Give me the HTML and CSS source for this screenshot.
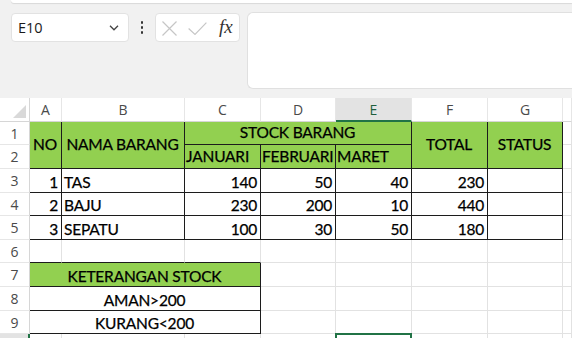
FILE: index.html
```html
<!DOCTYPE html>
<html>
<head>
<meta charset="utf-8">
<link rel="stylesheet" href="styles.css">
</head>
<body>
<div class="ribbon-edge"></div>
<div class="fbar">
  <div class="namebox">
    <span class="nb-text">E10</span>
    <svg class="chev" width="10" height="6" viewBox="0 0 10 6"><path d="M1 0.8 L5 4.8 L9 0.8" fill="none" stroke="#444" stroke-width="1.3"/></svg>
  </div>
  <div class="vdots"><span></span><span></span><span></span></div>
  <div class="fxbox">
    <svg class="ic-x" width="15" height="15" viewBox="0 0 15 15"><path d="M0.5 0.5 L14.5 14.5 M14.5 0.5 L0.5 14.5" stroke="#c6c6c6" stroke-width="1.2" fill="none"/></svg>
    <svg class="ic-ok" width="19" height="13" viewBox="0 0 19 13"><path d="M0.6 6.5 L7 12.4 L18.4 0.6" stroke="#c6c6c6" stroke-width="1.2" fill="none"/></svg>
    <span class="fx">fx</span>
  </div>
  <div class="formula"></div>
</div>
<div class="sheet">
  <!-- header -->
  <div class="h corner"><span class="tri"></span></div>
  <div class="h">A</div><div class="h">B</div><div class="h">C</div><div class="h">D</div>
  <div class="h hsel">E</div><div class="h">F</div><div class="h">G</div><div class="h"></div>

  <!-- row 1 -->
  <div class="rh">1</div>
  <div class="c b g ctr mid span2r">NO</div>
  <div class="c b g ctr mid span2r">NAMA BARANG</div>
  <div class="c b g ctr mid span3c">STOCK BARANG</div>
  <div class="c b g ctr mid span2r">TOTAL</div>
  <div class="c b g ctr mid span2r">STATUS</div>
  <div class="c"></div>

  <!-- row 2 -->
  <div class="rh">2</div>
  <div class="c b g mid tight">JANUARI</div>
  <div class="c b g mid tight">FEBRUARI</div>
  <div class="c b g mid tight">MARET</div>
  <div class="c"></div>

  <!-- row 3 -->
  <div class="rh">3</div>
  <div class="c b r">1</div><div class="c b">TAS</div>
  <div class="c b r">140</div><div class="c b r">50</div><div class="c b r">40</div>
  <div class="c b r">230</div><div class="c b"></div><div class="c"></div>

  <!-- row 4 -->
  <div class="rh">4</div>
  <div class="c b r">2</div><div class="c b">BAJU</div>
  <div class="c b r">230</div><div class="c b r">200</div><div class="c b r">10</div>
  <div class="c b r">440</div><div class="c b"></div><div class="c"></div>

  <!-- row 5 -->
  <div class="rh">5</div>
  <div class="c b r">3</div><div class="c b">SEPATU</div>
  <div class="c b r">100</div><div class="c b r">30</div><div class="c b r">50</div>
  <div class="c b r">180</div><div class="c b"></div><div class="c"></div>

  <!-- row 6 -->
  <div class="rh">6</div>
  <div class="c bb"></div><div class="c bb"></div><div class="c bb"></div>
  <div class="c"></div><div class="c"></div><div class="c"></div><div class="c"></div><div class="c"></div>

  <!-- row 7 -->
  <div class="rh">7</div>
  <div class="c b g ctr span3c">KETERANGAN STOCK</div>
  <div class="c"></div><div class="c"></div><div class="c"></div><div class="c"></div><div class="c"></div>

  <!-- row 8 -->
  <div class="rh">8</div>
  <div class="c b ctr span3c">AMAN&gt;200</div>
  <div class="c"></div><div class="c"></div><div class="c"></div><div class="c"></div><div class="c"></div>

  <!-- row 9 -->
  <div class="rh">9</div>
  <div class="c b ctr span3c">KURANG&lt;200</div>
  <div class="c"></div><div class="c"></div><div class="c"></div><div class="c"></div><div class="c"></div>

  <!-- row 10 (only its top edge is in view) -->
  <div class="rh rhsel"></div>
  <div class="c"></div><div class="c"></div><div class="c"></div><div class="c"></div>
  <div class="c sel"></div><div class="c"></div><div class="c"></div><div class="c"></div>
</div>
</body>
</html>
```

FILE: styles.css
```css
html, body {
  margin: 0;
  padding: 0;
  background: #f1f1f1;
  overflow: hidden;
  height: 338px;
}

.ribbon-edge {
  height: 3px;
  margin-left: 11px;
  background: #fff;
  border-bottom-left-radius: 6px;
  box-shadow: 0 1px 1px rgba(0,0,0,0.10);
}

.fbar {
  display: flex;
  align-items: flex-start;
  height: 77px;
  margin-top: 9px;
  padding-left: 11px;
}

.namebox {
  box-sizing: border-box;
  width: 118px;
  height: 29px;
  margin-top: 1px;
  background: #fff;
  border: 1px solid #e2e2e2;
  border-radius: 4px;
  display: flex;
  align-items: center;
  justify-content: space-between;
  padding: 0 9px 0 6px;
}

.nb-text {
  font-family: "Open Sans", sans-serif;
  font-size: 14.5px;
  color: #1a1a1a;
}

.chev { display: block; margin-top: 1px; }

.vdots {
  width: 26px;
  height: 29px;
  margin-top: 1px;
  display: flex;
  flex-direction: column;
  align-items: center;
  justify-content: center;
  gap: 2.5px;
}
.vdots span {
  width: 2.5px;
  height: 2.5px;
  border-radius: 50%;
  background: #333;
}

.fxbox {
  box-sizing: border-box;
  width: 85px;
  height: 29px;
  margin-top: 1px;
  background: #fff;
  border: 1px solid #e2e2e2;
  border-radius: 4px;
  display: flex;
  align-items: center;
  padding-left: 6px;
}
.ic-x { display: block; margin-top: 1px; }
.ic-ok { display: block; margin-left: 11px; margin-top: 1px; }
.fx {
  font-family: "Liberation Serif", serif;
  font-style: italic;
  font-size: 19px;
  color: #333;
  margin-left: 12px;
  line-height: 1;
  margin-bottom: 2px;
}

.formula {
  box-sizing: border-box;
  flex: 1;
  height: 77px;
  margin-left: 7px;
  background: #fff;
  border: 1px solid #e0e0e0;
  border-right: none;
  border-radius: 6px 0 0 6px;
}

.sheet {
  margin-top: 9px;
  display: grid;
  grid-template-columns: 30px 32px 123px 76px 75px 76px 76px 75px 1fr;
  grid-template-rows: 24px 23px 24px 24px 23px 24px 23px 24px 24px 23px 24px;
  background: #fff;
  font-family: "Lato", sans-serif;
  font-size: 15.5px;
  letter-spacing: -0.2px;
  color: #000;
  -webkit-text-stroke: 0.25px #000;
}

.h {
  box-sizing: border-box;
  background: #fff;
  border-right: 1px solid #e6e6e6;
  border-bottom: 1px solid #d6d6d6;
  display: flex;
  align-items: center;
  justify-content: center;
  font-family: "Open Sans", sans-serif;
  font-size: 14px;
  letter-spacing: 0;
  color: #4a4a4a;
  -webkit-text-stroke: 0;
}

.corner {
  position: relative;
  border-right: 1px solid #d6d6d6;
}
.tri {
  position: absolute;
  right: 3px;
  bottom: 3px;
  width: 0;
  height: 0;
  border-left: 13px solid transparent;
  border-bottom: 13px solid #d9d9d9;
}

.hsel {
  background: #e3e3e3;
  border-bottom: 2px solid #217346;
  color: #1e5e3c;
}

.rh {
  box-sizing: border-box;
  background: #fff;
  border-right: 1px solid #d6d6d6;
  border-bottom: 1px solid #e6e6e6;
  display: flex;
  align-items: center;
  justify-content: center;
  font-family: "Open Sans", sans-serif;
  font-size: 14px;
  letter-spacing: 0;
  color: #4a4a4a;
  -webkit-text-stroke: 0;
}

.rhsel {
  background: #e3e3e3;
  border-right: 2px solid #217346;
  color: #1e5e3c;
}

.c {
  box-sizing: border-box;
  min-width: 0;
  border-right: 1px solid #e2e2e2;
  border-bottom: 1px solid #e2e2e2;
  display: flex;
  align-items: flex-end;
  padding: 0 3px 2px 2px;
  line-height: 1;
  white-space: nowrap;
  overflow: hidden;
}

.b {
  border-right-color: #1c1c1c;
  border-bottom-color: #1c1c1c;
}
.bb { border-bottom-color: #1c1c1c; }
.g { background: #92d050; }
.r { justify-content: flex-end; }
.ctr { justify-content: center; }
.mid { align-items: center; padding-bottom: 0; }
.tight { padding-left: 1px; padding-right: 0; }
.span2r { grid-row: span 2; }
.span3c { grid-column: span 3; }

.sel {
  position: relative;
  overflow: visible;
}
.sel::after {
  content: "";
  position: absolute;
  left: -1px;
  top: -1px;
  right: -1px;
  bottom: -1px;
  border: 2px solid #217346;
}
```
